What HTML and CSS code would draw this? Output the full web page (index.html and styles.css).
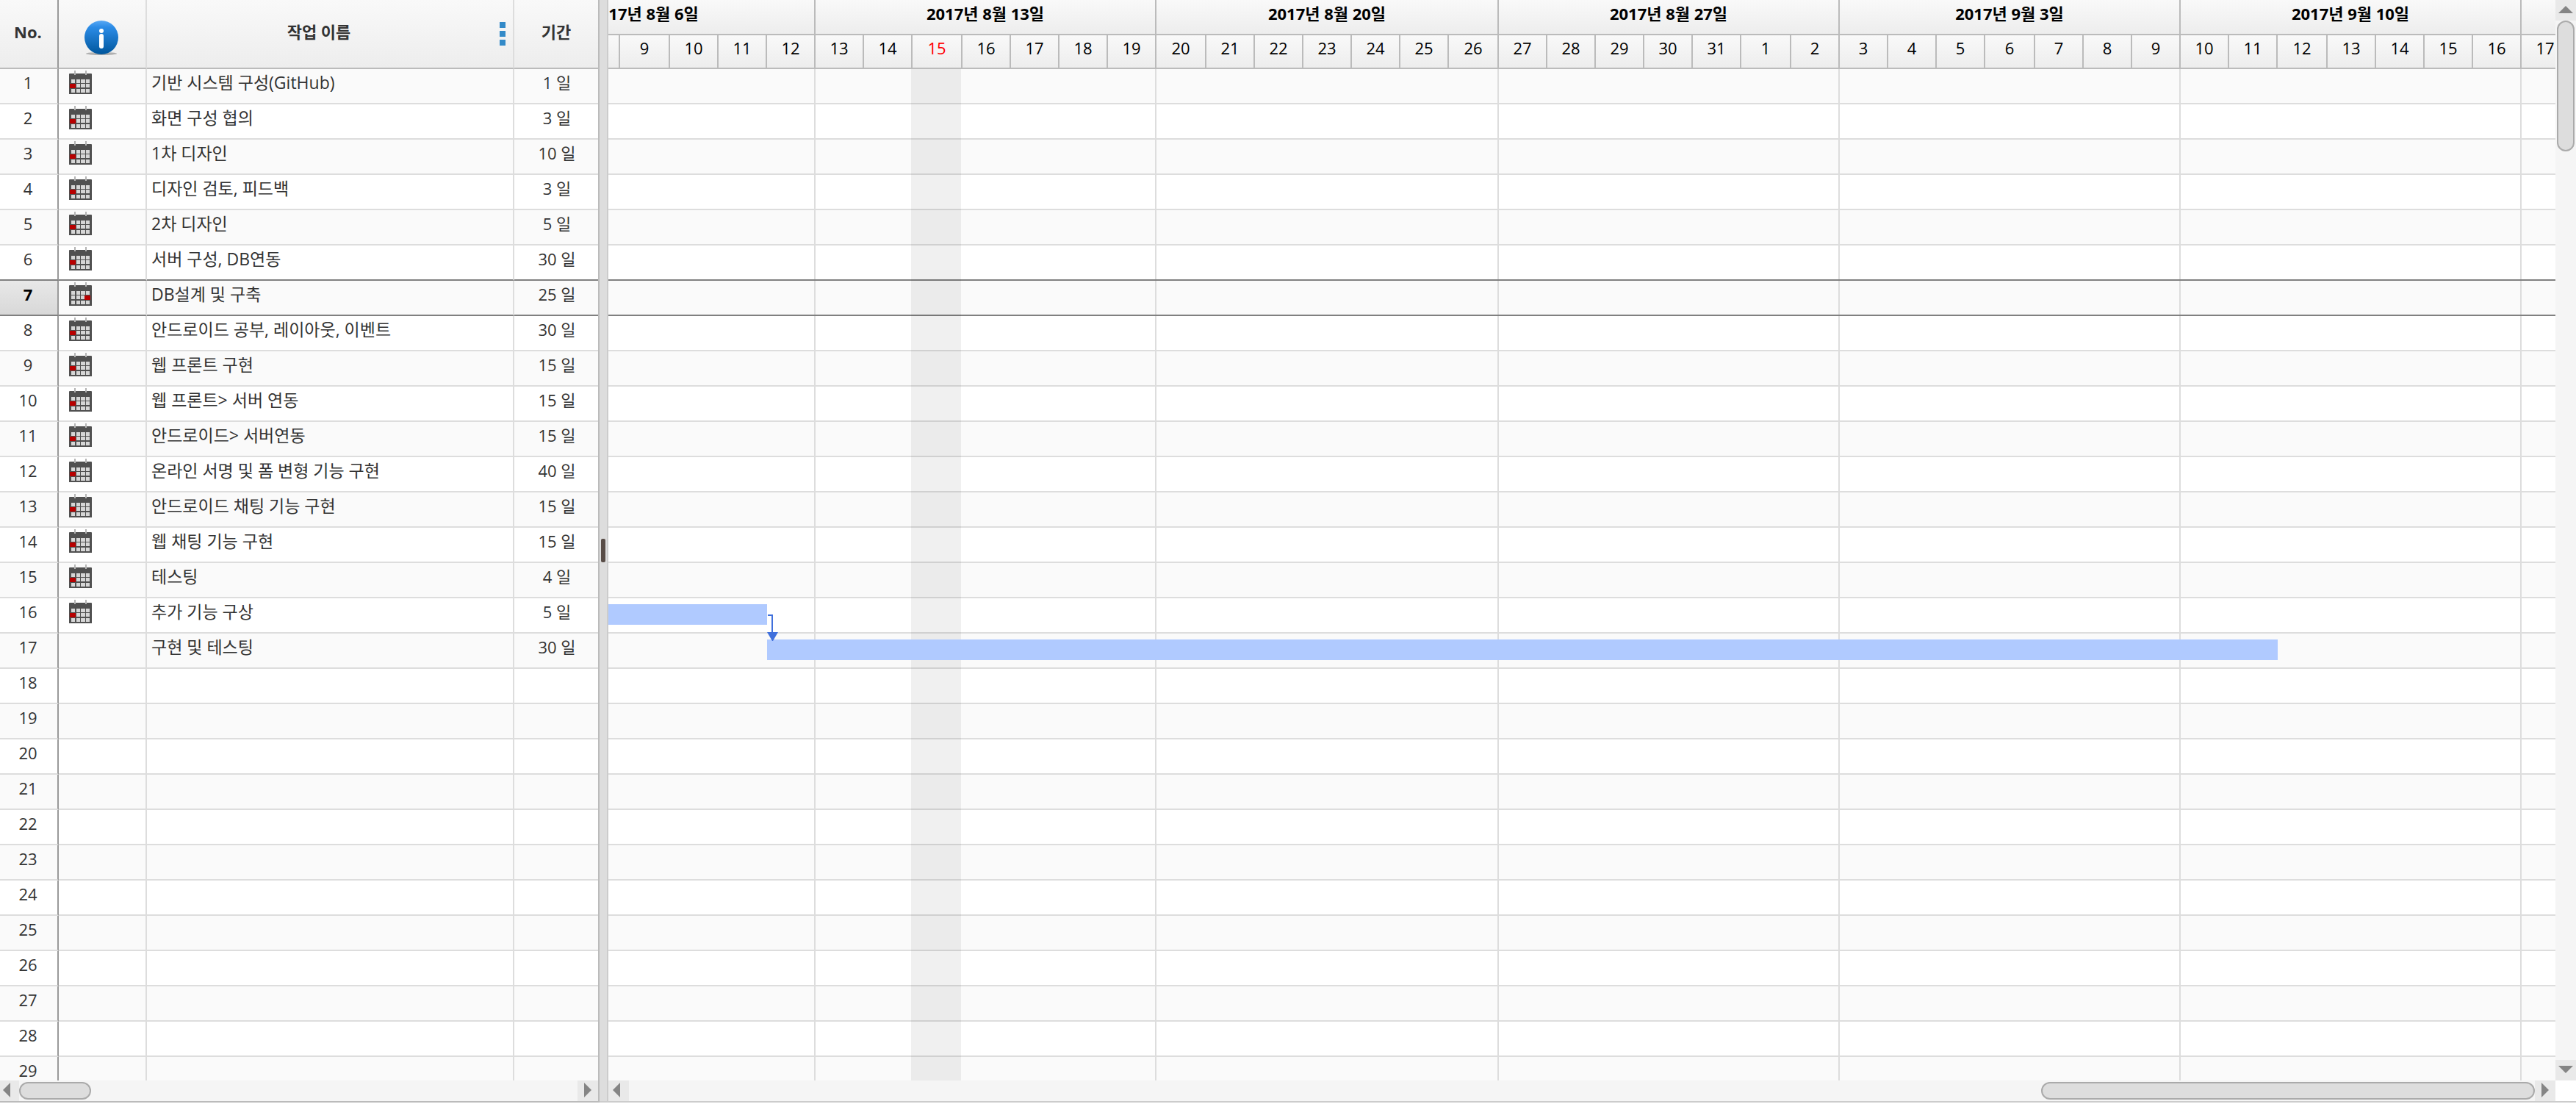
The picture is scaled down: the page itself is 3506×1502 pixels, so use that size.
FILE: index.html
```html
<!DOCTYPE html>
<html lang="ko">
<head>
<meta charset="utf-8">
<title>작업 일정</title>
<link rel="stylesheet" href="styles.css">
</head>
<body>
<svg class="symbols" aria-hidden="true">
  <defs>
    <linearGradient id="ball" x1="0" y1="0" x2="0" y2="1"><stop offset="0" stop-color="#58a8f4"/><stop offset=".2" stop-color="#2b8be6"/><stop offset="1" stop-color="#00569c"/></linearGradient>
    <symbol id="cal" viewBox="0 0 31 32">
      <path fill="#505050" d="M0 5q0-1 1-1h29q1 0 1 1v27H0z"/>
      <path fill="#b4b4b4" d="M7 0h2v6H7zM22 0h2v6h-2z"/>
      <path fill="#d6d6d6" d="M3 12h5v5H3zM10 12h5v5h-5zM16 12h6v5h-6zM23 12h5v5h-5zM3 18h5v5H3zM10 18h5v5h-5zM16 18h6v5h-6zM23 18h5v5h-5zM3 25h5v5H3zM10 25h5v5h-5zM16 25h6v5h-6zM23 25h5v5h-5z"/>
    </symbol>
    <symbol id="cal-start" viewBox="0 0 31 32"><use href="#cal"/><path fill="#b80000" d="M1 18h8v6H1z"/></symbol>
    <symbol id="cal-end" viewBox="0 0 31 32"><use href="#cal"/><path fill="#b80000" d="M21 18h8v6h-8z"/></symbol>
  </defs>
</svg>
<main class="app">
  <section class="sheet">
    <div class="sheet-view">
      <table class="tasks">
        <colgroup><col class="c-no"><col class="c-info"><col class="c-name"><col class="c-term"></colgroup>
        <thead>
          <tr>
            <th class="no">No.</th>
            <th class="info"><svg class="info-icon" viewBox="0 0 46 48" role="img" aria-label="정보"><ellipse cx="23" cy="45" rx="21" ry="2" fill="#b0b0b0"/><circle cx="23" cy="23" r="23" fill="url(#ball)"/><circle cx="23" cy="14" r="3" fill="#fff"/><rect x="20" y="18" width="6" height="20" rx="3" fill="#fff"/></svg></th>
            <th><div class="name-head"><span>작업 이름</span><button class="menu" type="button" aria-label="열 메뉴"><i></i><i></i><i></i></button></div></th>
            <th>기간</th>
          </tr>
        </thead>
        <tbody>
          <tr><th class="no">1</th><td class="info"><svg class="cal"><use href="#cal-start"/></svg></td><td class="name">기반 시스템 구성(GitHub)</td><td class="term">1 일</td></tr>
          <tr><th class="no">2</th><td class="info"><svg class="cal"><use href="#cal-start"/></svg></td><td class="name">화면 구성 협의</td><td class="term">3 일</td></tr>
          <tr><th class="no">3</th><td class="info"><svg class="cal"><use href="#cal-start"/></svg></td><td class="name">1차 디자인</td><td class="term">10 일</td></tr>
          <tr><th class="no">4</th><td class="info"><svg class="cal"><use href="#cal-start"/></svg></td><td class="name">디자인 검토, 피드백</td><td class="term">3 일</td></tr>
          <tr><th class="no">5</th><td class="info"><svg class="cal"><use href="#cal-start"/></svg></td><td class="name">2차 디자인</td><td class="term">5 일</td></tr>
          <tr class="before-current"><th class="no">6</th><td class="info"><svg class="cal"><use href="#cal-start"/></svg></td><td class="name">서버 구성, DB연동</td><td class="term">30 일</td></tr>
          <tr class="current"><th class="no">7</th><td class="info"><svg class="cal"><use href="#cal-end"/></svg></td><td class="name">DB설계 및 구축</td><td class="term">25 일</td></tr>
          <tr><th class="no">8</th><td class="info"><svg class="cal"><use href="#cal-start"/></svg></td><td class="name">안드로이드 공부, 레이아웃, 이벤트</td><td class="term">30 일</td></tr>
          <tr><th class="no">9</th><td class="info"><svg class="cal"><use href="#cal-start"/></svg></td><td class="name">웹 프론트 구현</td><td class="term">15 일</td></tr>
          <tr><th class="no">10</th><td class="info"><svg class="cal"><use href="#cal-start"/></svg></td><td class="name">웹 프론트&gt; 서버 연동</td><td class="term">15 일</td></tr>
          <tr><th class="no">11</th><td class="info"><svg class="cal"><use href="#cal-start"/></svg></td><td class="name">안드로이드&gt; 서버연동</td><td class="term">15 일</td></tr>
          <tr><th class="no">12</th><td class="info"><svg class="cal"><use href="#cal-start"/></svg></td><td class="name">온라인 서명 및 폼 변형 기능 구현</td><td class="term">40 일</td></tr>
          <tr><th class="no">13</th><td class="info"><svg class="cal"><use href="#cal-start"/></svg></td><td class="name">안드로이드 채팅 기능 구현</td><td class="term">15 일</td></tr>
          <tr><th class="no">14</th><td class="info"><svg class="cal"><use href="#cal-start"/></svg></td><td class="name">웹 채팅 기능 구현</td><td class="term">15 일</td></tr>
          <tr><th class="no">15</th><td class="info"><svg class="cal"><use href="#cal-start"/></svg></td><td class="name">테스팅</td><td class="term">4 일</td></tr>
          <tr><th class="no">16</th><td class="info"><svg class="cal"><use href="#cal-start"/></svg></td><td class="name">추가 기능 구상</td><td class="term">5 일</td></tr>
          <tr><th class="no">17</th><td></td><td class="name">구현 및 테스팅</td><td class="term">30 일</td></tr>
          <tr><th class="no">18</th><td></td><td></td><td></td></tr>
          <tr><th class="no">19</th><td></td><td></td><td></td></tr>
          <tr><th class="no">20</th><td></td><td></td><td></td></tr>
          <tr><th class="no">21</th><td></td><td></td><td></td></tr>
          <tr><th class="no">22</th><td></td><td></td><td></td></tr>
          <tr><th class="no">23</th><td></td><td></td><td></td></tr>
          <tr><th class="no">24</th><td></td><td></td><td></td></tr>
          <tr><th class="no">25</th><td></td><td></td><td></td></tr>
          <tr><th class="no">26</th><td></td><td></td><td></td></tr>
          <tr><th class="no">27</th><td></td><td></td><td></td></tr>
          <tr><th class="no">28</th><td></td><td></td><td></td></tr>
          <tr><th class="no">29</th><td></td><td></td><td></td></tr>
        </tbody>
      </table>
    </div>
    <div class="hbar">
      <button class="arrow first" type="button" aria-label="왼쪽으로"><svg viewBox="0 0 10 20"><path d="M10 0v20L0 10z"/></svg></button>
      <div class="thumb short"></div>
      <button class="arrow end" type="button" aria-label="오른쪽으로"><svg viewBox="0 0 10 20"><path d="M0 0v20l10-10z"/></svg></button>
    </div>
  </section>
  <div class="splitter"><span class="grip"></span></div>
  <section class="chart">
    <div class="chart-main">
      <div class="chart-view">
        <div class="timeline">
          <div class="week"><div class="label">2017년 8월 6일</div><div class="days"><span></span><span></span><span></span><span class="wide">9</span><span>10</span><span>11</span><span>12</span></div></div>
          <div class="week"><div class="label">2017년 8월 13일</div><div class="days"><span>13</span><span>14</span><span class="wide today">15</span><span>16</span><span>17</span><span>18</span><span>19</span></div></div>
          <div class="week"><div class="label">2017년 8월 20일</div><div class="days"><span class="wide">20</span><span>21</span><span>22</span><span>23</span><span>24</span><span>25</span><span class="wide">26</span></div></div>
          <div class="week"><div class="label">2017년 8월 27일</div><div class="days"><span>27</span><span>28</span><span>29</span><span>30</span><span>31</span><span class="wide">1</span><span>2</span></div></div>
          <div class="week"><div class="label">2017년 9월 3일</div><div class="days"><span>3</span><span>4</span><span>5</span><span class="wide">6</span><span>7</span><span>8</span><span>9</span></div></div>
          <div class="week"><div class="label">2017년 9월 10일</div><div class="days"><span>10</span><span>11</span><span class="wide">12</span><span>13</span><span>14</span><span>15</span><span>16</span></div></div>
          <div class="week"><div class="label"></div><div class="days"><span>17</span></div></div>
          <div class="bars">
            <div class="holiday" style="left:594px;width:68px"></div>
            <div class="current-line"></div>
            <div class="bar" style="grid-row:16;margin-left:66px;width:332px"></div>
            <div class="bar" style="grid-row:17;margin-left:398px;width:2056px"></div>
            <svg class="link" style="left:398px;top:742px" viewBox="0 0 16 36"><path d="M1 1h6v24" fill="none" stroke="#4070dc" stroke-width="2"/><path d="M0 24h15L8 36H7z" fill="#4070dc"/></svg>
          </div>
        </div>
      </div>
      <div class="vbar">
        <button class="arrow" type="button" aria-label="위로"><svg class="flat" viewBox="0 0 20 10"><path d="M0 10h20L10 0z"/></svg></button>
        <div class="thumb tall"></div>
        <button class="arrow end" type="button" aria-label="아래로"><svg class="flat" viewBox="0 0 20 10"><path d="M0 0h20L10 10z"/></svg></button>
      </div>
    </div>
    <div class="hbar chart-hbar">
      <button class="arrow back" type="button" aria-label="왼쪽으로"><svg viewBox="0 0 10 20"><path d="M10 0v20L0 10z"/></svg></button>
      <div class="thumb long"></div>
      <button class="arrow" type="button" aria-label="오른쪽으로"><svg viewBox="0 0 10 20"><path d="M0 0v20l10-10z"/></svg></button>
    </div>
  </section>
</main>
</body>
</html>
```
FILE: styles.css
```css
* { box-sizing: border-box; }

body {
  margin: 0;
  background: #fff;
  color: #333;
  font: 22px/30px "Open Sans", "Noto Sans CJK KR", sans-serif;
}

.symbols { position: absolute; width: 0; height: 0; }

button { border: 0; padding: 0; font: inherit; }

.app {
  display: flex;
  height: 100vh;
  padding-bottom: 2px;
}

/* Task sheet */
.sheet {
  display: flex;
  flex-direction: column;
  flex: none;
  border-right: 2px solid #bbb;
  border-bottom: 2px solid #bbb;
}

.sheet-view { flex: 1; min-height: 0; overflow: hidden; }

.tasks {
  width: 814px;
  table-layout: fixed;
  border-collapse: separate;
  border-spacing: 0;
}

.c-no { width: 80px; }
.c-info { width: 120px; }
.c-name { width: 500px; }
.c-term { width: 114px; }

.tasks th, .tasks td {
  height: 48px;
  padding: 3px 6px 13px;
  border-bottom: 2px solid #ddd;
  border-right: 2px solid #ddd;
  text-align: left;
  white-space: nowrap;
}

.tasks th:last-child, .tasks td:last-child { border-right: 0; }
.tasks tbody tr:nth-child(odd) { background: #fafafa; }

.tasks .no {
  padding-left: 0;
  padding-right: 2px;
  border-right-color: #999;
  text-align: center;
}

.tasks tbody .no { font-weight: 400; }
.tasks .name { font-size: 23px; }
.tasks td.term { padding-right: 0; padding-left: 2px; text-align: center; }
.tasks .info { padding: 0 14px; vertical-align: top; }

.tasks thead th {
  height: 94px;
  padding: 0 0 6px;
  border-bottom-color: #bbb;
  background: linear-gradient(#f9f9f9, #ededed);
  text-align: center;
}

.tasks thead .no { padding-right: 2px; }
.tasks thead .info { padding: 28px 2px 0 0; }

.tasks tbody .before-current > *, .tasks tbody .current > * { border-bottom-color: #808080; }

.tasks .current .no {
  background: linear-gradient(#e8e8e8, #d8d8d8);
  color: #000;
  font-weight: 700;
}

.info-icon { display: block; width: 46px; height: 48px; margin: 0 auto; }
.cal { display: block; width: 31px; height: 32px; margin-top: 2px; }

.name-head { display: flex; align-items: center; }
.name-head span { flex: 1; }

.menu {
  display: flex;
  flex-direction: column;
  gap: 4px;
  margin: 6px 10px 0 12px;
  background: none;
}

.menu i { width: 8px; height: 8px; background: #338ac8; }

/* Divider between sheet and chart */
.splitter {
  display: flex;
  align-items: center;
  flex: none;
  width: 12px;
  padding-left: 2px;
  border-right: 2px solid #ccc;
  border-bottom: 2px solid #ccc;
  background: #ddd;
}

.grip { width: 6px; height: 32px; border-radius: 2px; background: #594d47; }

/* Gantt chart */
.chart {
  display: flex;
  flex-direction: column;
  flex: 1;
  min-width: 0;
  border-bottom: 2px solid #ccc;
}

.chart-main { display: flex; flex: 1; min-height: 0; }
.chart-view { flex: 1; min-width: 0; overflow: hidden; }

.timeline {
  position: relative;
  display: flex;
  width: max-content;
  min-width: calc(100% + 182px);
  height: 100%;
  margin-left: -182px;
  color: #000;
  text-align: center;
  background: repeating-linear-gradient(#fafafa 0 46px, #ddd 46px 48px, #fff 48px 94px, #ddd 94px 96px) 0 94px no-repeat;
}

.week { border-right: 2px solid #ddd; }

.label {
  height: 48px;
  margin-right: -2px;
  padding-top: 3px;
  border-right: 2px solid #bbb;
  border-bottom: 2px solid #bbb;
  background: linear-gradient(#f9f9f9, #ededed);
  font-weight: 700;
}

.days {
  display: flex;
  height: 46px;
  margin-right: -2px;
  border-bottom: 2px solid #bbb;
  background: linear-gradient(#f9f9f9, #ededed);
}

.days span { width: 66px; padding-top: 2px; border-right: 2px solid #bbb; }
.days .wide { width: 68px; }
.days .today { color: #f00; }

.bars {
  position: absolute;
  inset: 94px 0 0;
  display: grid;
  grid-template-rows: repeat(29, 48px);
}

.bar {
  z-index: 1;
  grid-column: 1;
  align-self: end;
  height: 28px;
  margin-bottom: 12px;
  background: #b0caff;
}

.holiday { position: absolute; top: 0; bottom: 0; background: rgba(0, 0, 0, .06); }

.current-line {
  grid-row: 7;
  grid-column: 1;
  height: 50px;
  margin-top: -2px;
  border: solid #808080;
  border-width: 2px 0;
}

.link { position: absolute; z-index: 2; width: 16px; height: 36px; }

/* Scroll bars */
.hbar { display: flex; flex: none; align-items: center; height: 28px; background: #f5f5f5; }
.chart-hbar { margin-right: 28px; }

.vbar {
  display: flex;
  flex-direction: column;
  align-items: center;
  flex: none;
  width: 28px;
  background: #f5f5f5;
}

.arrow {
  display: grid;
  place-content: center;
  width: 28px;
  height: 28px;
  padding-bottom: 2px;
  background: #e9e9e9;
}

.arrow.first { width: 26px; padding-right: 8px; }
.arrow.back { padding-right: 6px; }
.arrow.end { margin-left: auto; }
.vbar .end { margin: auto 0 0; }
.arrow svg { width: 10px; height: 20px; fill: #858585; }
.arrow .flat { width: 20px; height: 10px; }

.thumb { border: 2px solid #aaa; border-radius: 12px; background: #ddd; }
.short { width: 98px; height: 24px; }
.long { width: 672px; height: 24px; margin-left: auto; }
.tall { width: 24px; height: 178px; }
```
